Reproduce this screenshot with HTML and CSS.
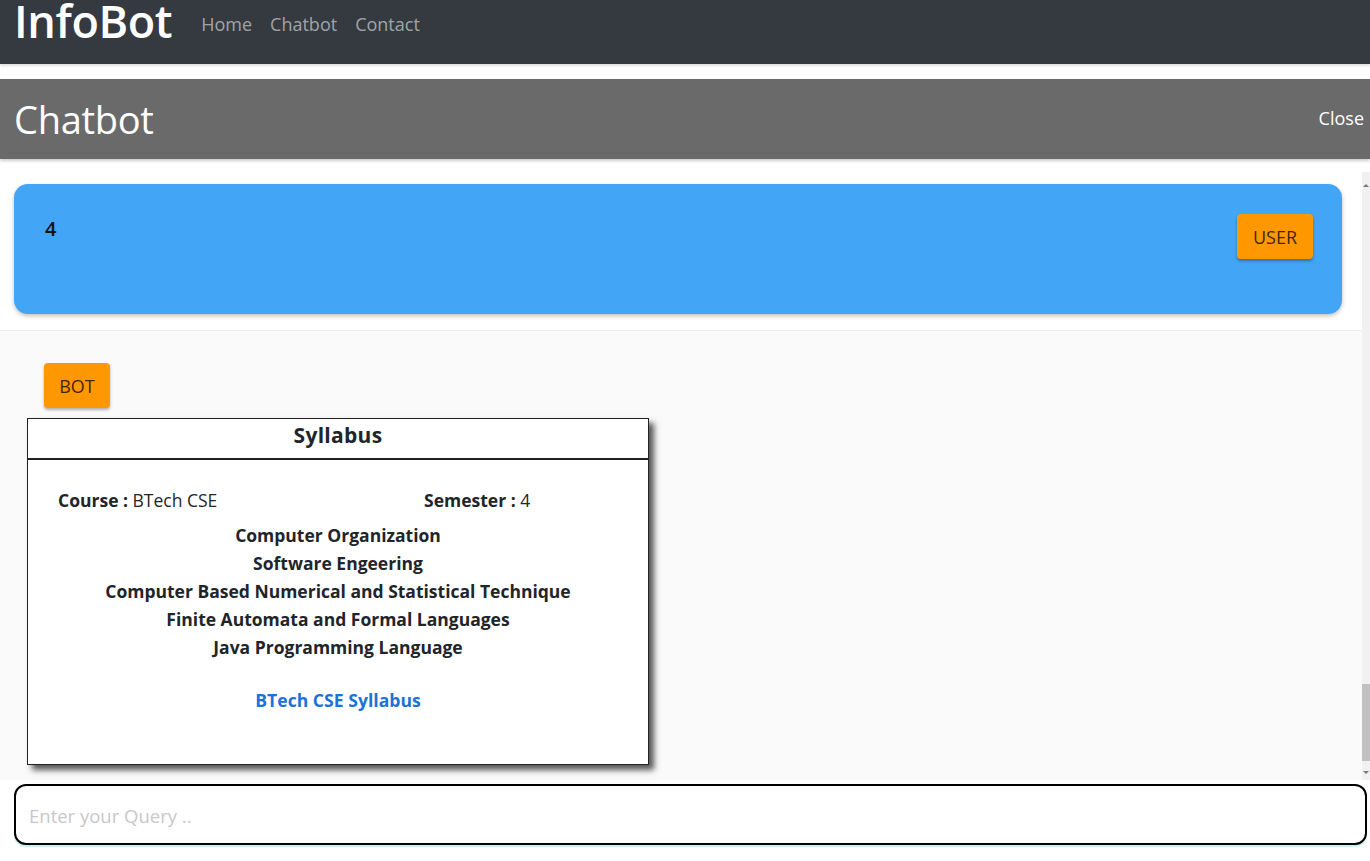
FILE: index.html
```html
<!DOCTYPE html>
<html lang="en">
<head>
<meta charset="utf-8">
<title>InfoBot</title>
<link rel="stylesheet" href="styles.css">
</head>
<body>
<nav class="navbar">
  <a class="brand" href="#">InfoBot</a>
  <ul class="nav-links">
    <li><a href="#">Home</a></li>
    <li><a href="#">Chatbot</a></li>
    <li><a href="#">Contact</a></li>
  </ul>
</nav>
<div class="gap"></div>
<header class="chat-header">
  <h1 class="chat-title">Chatbot</h1>
  <a class="close" href="#">Close</a>
</header>
<div class="gap-small"></div>
<div class="chat-frame">
  <div class="chat-scroll">
    <section class="user-row">
      <div class="user-msg">
        <span class="user-text">4</span>
        <button class="tag">USER</button>
      </div>
    </section>
    <section class="bot-row">
      <button class="tag">BOT</button>
      <div class="card">
        <div class="card-head">Syllabus</div>
        <div class="card-body">
          <div class="meta">
            <span><b>Course :</b> BTech CSE</span>
            <span><b>Semester :</b> 4</span>
          </div>
          <ul class="subjects">
            <li>Computer Organization</li>
            <li>Software Engeering</li>
            <li>Computer Based Numerical and Statistical Technique</li>
            <li>Finite Automata and Formal Languages</li>
            <li>Java Programming Language</li>
          </ul>
          <a class="syl-link" href="#">BTech CSE Syllabus</a>
        </div>
      </div>
    </section>
  </div>
  <div class="scrollbar">
    <span class="arrow up"></span>
    <div class="track">
      <div class="thumb"></div>
    </div>
    <span class="arrow down"></span>
  </div>
</div>
<div class="input-wrap">
  <input class="query" type="text" placeholder="Enter your Query ..">
</div>
</body>
</html>
```
FILE: styles.css
```css
* { box-sizing: border-box; }
html, body { margin: 0; padding: 0; }
body {
  font-family: "Open Sans", "Noto Sans", sans-serif;
  background: #fff;
  color: #212529;
  width: 1370px;
  height: 861px;
  overflow: hidden;
}
a { text-decoration: none; }

.navbar {
  height: 64px;
  background: #343a40;
  display: flex;
  align-items: flex-start;
  padding: 0 0 0 14px;
  box-shadow: 0 2px 2px rgba(0,0,0,0.12);
  position: relative;
}
.brand {
  color: #fff;
  font-size: 45px;
  font-weight: 600;
  letter-spacing: -0.4px;
  line-height: 42px;
  margin-right: 29px;
}
.nav-links {
  list-style: none;
  display: flex;
  gap: 18px;
  margin: 0;
  padding: 0;
  line-height: 24px;
  margin-top: 12px;
}
.nav-links a {
  color: rgba(255,255,255,0.55);
  font-size: 18px;
}

.gap { height: 15px; }
.chat-header {
  height: 80px;
  background: #6a6a6a;
  display: flex;
  align-items: center;
  justify-content: space-between;
  padding: 0 6px 0 14px;
  box-shadow: 0 2px 3px rgba(0,0,0,0.2);
  position: relative;
}
.chat-title {
  margin: 0;
  color: #fff;
  font-weight: 400;
  font-size: 38px;
  letter-spacing: -0.3px;
}
.close {
  color: #fff;
  font-size: 18px;
  margin-top: -2px;
}
.gap-small { height: 13px; }

.chat-frame {
  display: flex;
  height: 608px;
}
.chat-scroll {
  flex: 1;
  overflow: hidden;
  display: flex;
  flex-direction: column;
}
.user-row {
  padding: 12px 20px 16px 14px;
  border-bottom: 1px solid #eeeeee;
  background: #fff;
}
.user-msg {
  height: 130px;
  background: #42a5f5;
  border-radius: 14px;
  box-shadow: 0 2px 4px rgba(0,0,0,0.25);
  display: flex;
  justify-content: space-between;
  align-items: flex-start;
  padding: 30px 29px 0 31px;
}
.user-text {
  font-size: 20px;
  font-weight: 600;
  color: #111;
  margin-top: 1px;
}
.tag {
  font-family: inherit;
  background: #ff9800;
  color: rgba(40,20,0,0.9);
  border: none;
  border-radius: 4px;
  font-size: 18px;
  height: 45px;
  padding: 0 16px;
  box-shadow: 0 2px 3px rgba(0,0,0,0.3);
}
.bot-row {
  flex: 1;
  background: #fafafa;
  padding: 32px 0 0 27px;
}
.bot-row .tag {
  margin-left: 17px;
  width: 66px;
  padding: 0;
}
.card {
  margin-top: 10px;
  width: 622px;
  height: 347px;
  background: #fff;
  border: 1px solid #222;
  box-shadow: 5px 5px 6px #555;
}
.card-head {
  height: 41px;
  border-bottom: 2px solid #222;
  text-align: center;
  font-weight: 700;
  font-size: 21px;
  letter-spacing: 0.3px;
  line-height: 32px;
}
.card-body {
  padding-top: 26px;
  text-align: center;
}
.meta {
  display: grid;
  grid-template-columns: 366px 1fr;
  text-align: left;
  padding-left: 30px;
  font-size: 17.5px;
  line-height: 28px;
}
.meta b { font-weight: 700; }
.subjects {
  list-style: none;
  margin: 7px 0 0;
  padding: 0;
  font-weight: 700;
  font-size: 17.5px;
  line-height: 28px;
}
.syl-link {
  display: inline-block;
  margin-top: 27px;
  color: #1a73d9;
  font-weight: 700;
  font-size: 17.6px;
}

.scrollbar {
  width: 8px;
  background: #f1f1f1;
  display: flex;
  flex-direction: column;
  align-items: center;
}
.arrow {
  width: 0; height: 0;
  border-left: 3px solid transparent;
  border-right: 3px solid transparent;
  margin: 12px 0 6px;
}
.arrow.up { border-bottom: 3px solid #777; }
.arrow.down { border-top: 3px solid #777; margin: 4px 0 6px; }
.track {
  flex: 1;
  width: 100%;
  display: flex;
  flex-direction: column;
  justify-content: flex-end;
  padding-bottom: 6px;
}
.thumb {
  height: 77px;
  background: #c1c1c1;
}

.input-wrap {
  padding: 4px 3px 0 14px;
}
.query {
  display: block;
  width: 100%;
  height: 61px;
  border: 2px solid #000;
  border-radius: 12px;
  padding: 2px 13px 0;
  font-family: inherit;
  font-size: 18.5px;
  color: #333;
  background: #fff;
  box-shadow: 0 2px 1px #c8f0f0;
  outline: none;
}
.query::placeholder { color: #c8c8c8; }
```
